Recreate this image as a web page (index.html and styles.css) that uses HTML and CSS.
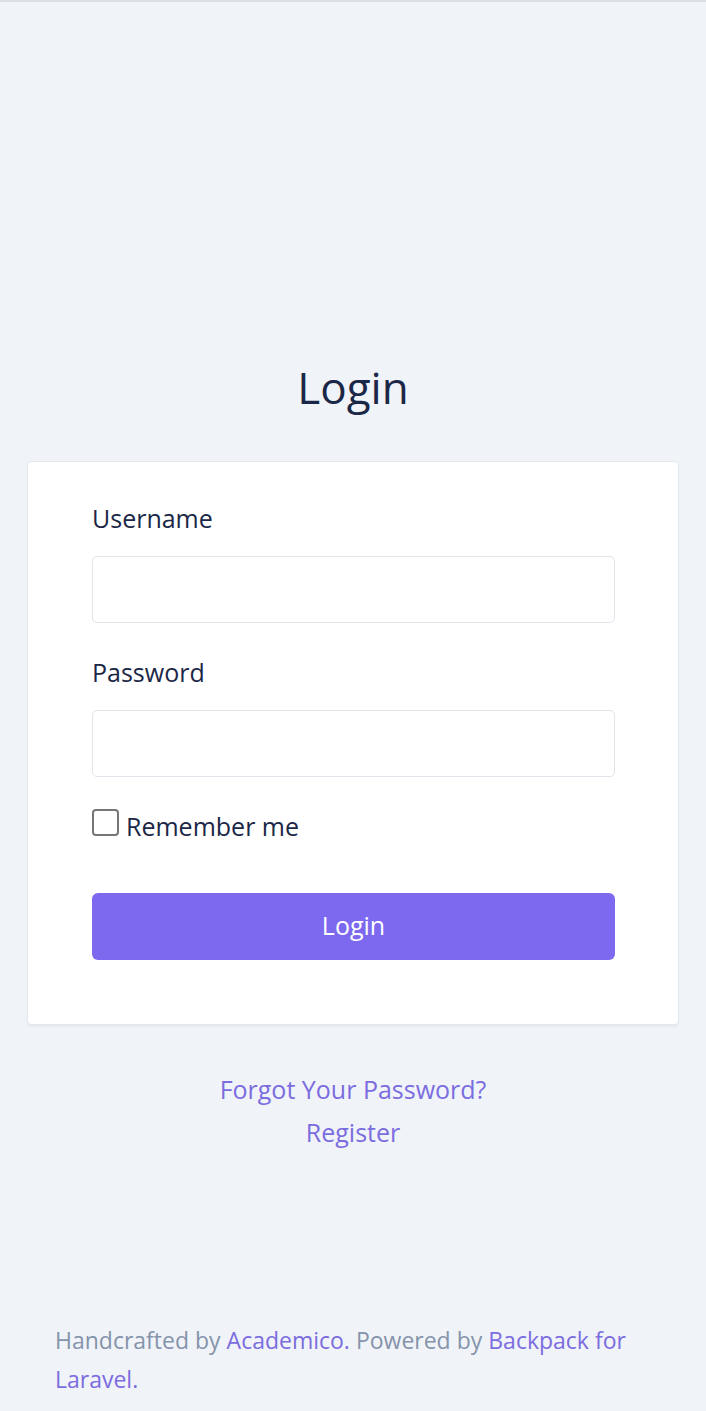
FILE: index.html
```html
<!DOCTYPE html>
<html lang="en">
<head>
<meta charset="utf-8">
<title>Login</title>
<link rel="stylesheet" href="styles.css">
</head>
<body>
<div class="page">
  <main class="main">
    <h1 class="title">Login</h1>
    <div class="card">
      <form class="form">
        <label class="label" for="username">Username</label>
        <input class="input" id="username" type="text">
        <label class="label label-pw" for="password">Password</label>
        <input class="input" id="password" type="password">
        <label class="remember"><span class="check"></span>Remember me</label>
        <button class="btn" type="button">Login</button>
      </form>
    </div>
    <div class="links">
      <a href="#">Forgot Your Password?</a>
      <a href="#">Register</a>
    </div>
  </main>
  <footer class="footer">
    <span class="line">Handcrafted by <a href="#">Academico.</a> Powered by <a href="#">Backpack for</a></span>
    <span class="line"><a href="#">Laravel.</a></span>
  </footer>
</div>
</body>
</html>
```
FILE: styles.css
```css
html, body {
  margin: 0;
  padding: 0;
}
body {
  background: #f0f3f8;
  font-family: "Open Sans", "Noto Sans", sans-serif;
  color: #1b2746;
  border-top: 2px solid #dcdee4;
}
.page {
  min-height: 1409px;
  display: flex;
  flex-direction: column;
}
.main {
  padding-top: 359px;
  display: flex;
  flex-direction: column;
}
.title {
  margin: 0 0 47px;
  font-size: 44px;
  font-weight: 400;
  line-height: 53px;
  text-align: center;
  color: #1b2746;
}
.card {
  margin: 0 27px;
  background: #fff;
  border: 1px solid #e3e7ee;
  border-radius: 4px;
  box-shadow: 0 2px 2px rgba(30, 40, 70, 0.04);
  padding: 37px 63px 64px 64px;
}
.form {
  display: flex;
  flex-direction: column;
}
.label {
  font-size: 25px;
  line-height: 38px;
  margin-bottom: 19px;
}
.label-pw {
  margin-top: 30px;
}
.input {
  height: 67px;
  box-sizing: border-box;
  border: 1px solid #e1e4ea;
  border-radius: 5px;
  background: #fff;
  margin: 0;
}
.remember {
  margin-top: 30px;
  display: flex;
  align-items: center;
  font-size: 25px;
  line-height: 38px;
}
.check {
  width: 27px;
  height: 27px;
  box-sizing: border-box;
  border: 2px solid #767676;
  border-radius: 4px;
  margin-right: 7px;
  margin-top: -8px;
}
.btn {
  margin-top: 48px;
  height: 67px;
  border: none;
  border-radius: 6px;
  background: #7c69ef;
  color: #fff;
  font-family: inherit;
  font-size: 25px;
  padding: 0 0 4px;
}
.links {
  margin-top: 43px;
  display: flex;
  flex-direction: column;
  align-items: center;
}
.links a {
  color: #7b6ddf;
  text-decoration: none;
  font-size: 25px;
  line-height: 43px;
}
.footer {
  margin-top: auto;
  padding: 0 55px 12px;
  font-size: 23px;
  line-height: 39px;
  color: #8593ab;
  display: flex;
  flex-direction: column;
}
.footer a {
  color: #7b6ddf;
  text-decoration: none;
}
```
